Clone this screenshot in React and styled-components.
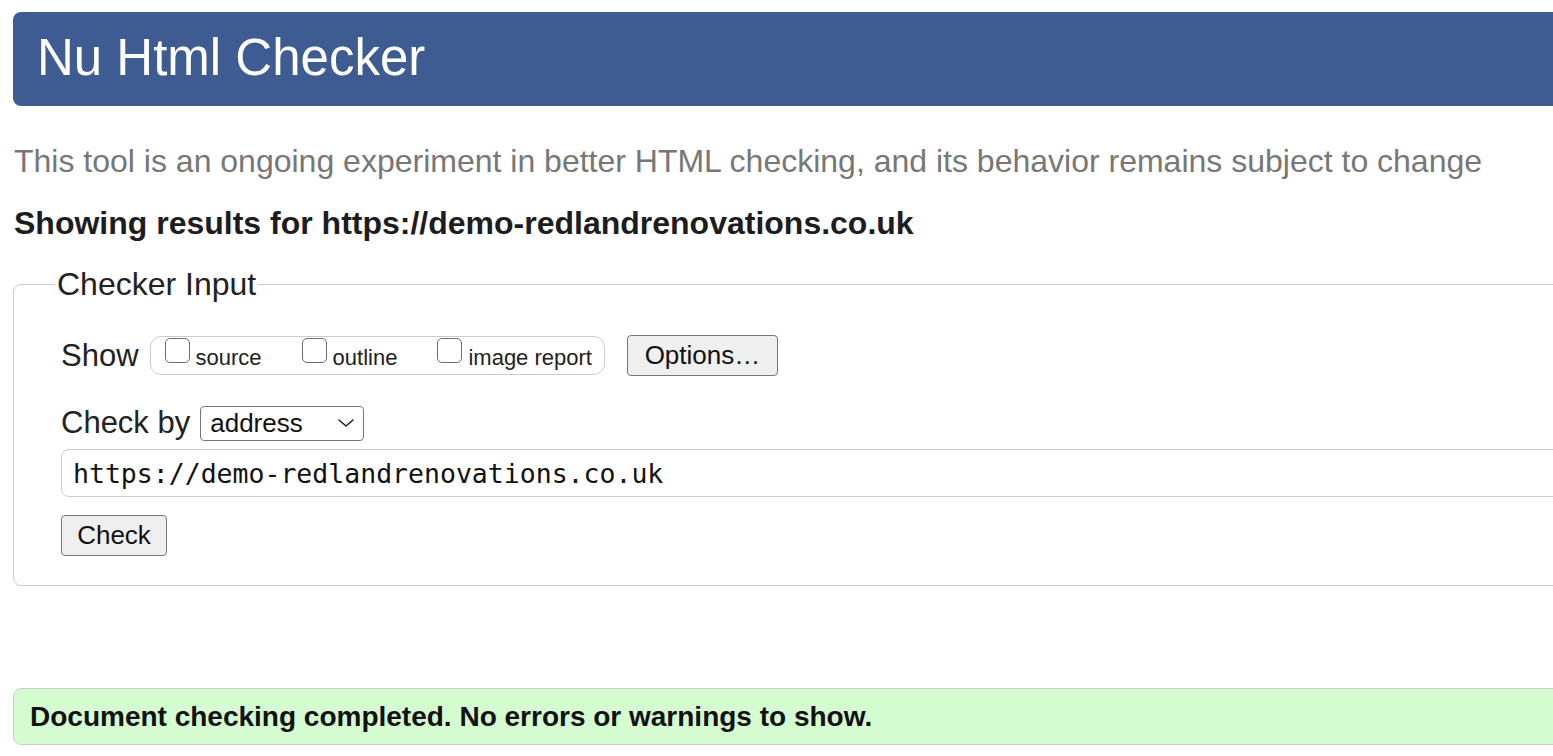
import styled, { createGlobalStyle } from 'styled-components'

const GlobalStyle = createGlobalStyle`
    html, body {
        margin: 0;
        padding: 0;
        background: #fff;
        overflow: hidden;
    }
    body {
        font-family: "Liberation Sans", Arial, sans-serif;
        color: #222;
    }
`

const Page = styled.div`
    width: 1640px;
    padding: 12px 0 0 13px;
    display: flex;
    flex-direction: column;
`
const Header = styled.header`
    height: 94px;
    display: flex;
    align-items: center;
    padding-left: 24px;
    border-radius: 8px;
    background-color: #3e5c91;
`
const Title = styled.h1`
    margin: 0 0 4px;
    font-size: 51px;
    font-weight: 400;
    line-height: 1;
    color: #fff;
`
const Subtitle = styled.p`
    margin: 36px 0 0 1px;
    font-size: 32px;
    line-height: 38px;
    color: #777;
`
const Results = styled.h2`
    margin: 24px 0 0 1px;
    font-size: 32px;
    line-height: 38px;
    font-weight: 700;
    color: #1d1d1f;
`
const Fieldset = styled.fieldset`
    margin: 23px 0 0;
    padding: 0 0 29px 47px;
    border: 1.5px solid #ccc;
    border-radius: 8px;
    min-width: 0;
`
const Legend = styled.legend`
    margin-left: -6px;
    padding: 0 2px;
    font-size: 32px;
    line-height: 38px;
    color: #222;
`
const Row = styled.div`
    display: flex;
    align-items: center;
    margin-top: ${p => p.$top}px;
`
const Label = styled.span`
    font-size: 31px;
    line-height: 38px;
    color: #222;
`
const ToggleGroup = styled.div`
    display: flex;
    align-items: flex-start;
    gap: 40px;
    height: 39px;
    box-sizing: border-box;
    margin-left: 11px;
    padding: 1px 12px 0 14px;
    border: 1.5px solid #ccc;
    border-radius: 11px;
`
const Toggle = styled.label`
    display: flex;
    align-items: flex-start;
    gap: 6px;
`
const Box = styled.span`
    width: 25px;
    height: 25px;
    box-sizing: border-box;
    border: 1.5px solid #6f6f6f;
    border-radius: 5px;
    background: #fff;
`
const ToggleText = styled.span`
    padding-top: 7px;
    font-size: 22px;
    line-height: 26px;
    color: #222;
`
const Button = styled.button`
    height: 41px;
    width: ${p => p.$w}px;
    margin-left: ${p => p.$left || 0}px;
    padding: 0;
    box-sizing: border-box;
    font-family: "Liberation Sans", Arial, sans-serif;
    font-size: 26px;
    color: #111;
    background: #efefef;
    border: 1.5px solid #767676;
    border-radius: 4px;
`
const Select = styled.div`
    display: flex;
    align-items: center;
    justify-content: space-between;
    width: 164px;
    height: 35px;
    box-sizing: border-box;
    margin-left: 10px;
    padding: 0 8px 0 9px;
    border: 1.5px solid #767676;
    border-radius: 4px;
    font-size: 26px;
    color: #111;
`
const UrlInput = styled.input`
    display: block;
    margin-top: 7px;
    width: 100%;
    height: 48px;
    box-sizing: border-box;
    padding: 0 11px;
    border: 1.5px solid #ccc;
    border-radius: 8px;
    font-family: "DejaVu Sans Mono", "Liberation Mono", monospace;
    font-size: 26.5px;
    color: #111;
    outline: none;
`
const Status = styled.div`
    margin-top: 102px;
    height: 57px;
    box-sizing: border-box;
    display: flex;
    align-items: center;
    padding-left: 16px;
    border: 1.5px solid #ccc;
    border-radius: 8px;
    background-color: #d5fcd0;
    font-size: 28px;
    font-weight: 700;
    color: #111;
`

const Chevron = () => (
    <svg width="18" height="12" viewBox="0 0 18 12" fill="none">
        <path d="M2 3l7 6 7-6" stroke="#222" strokeWidth="1.6" strokeLinecap="round" strokeLinejoin="round" />
    </svg>
)

const toggles = ['source', 'outline', 'image report']

export default function App() {
    return (
        <>
            <GlobalStyle />
            <Page>
                <Header>
                    <Title>Nu Html Checker</Title>
                </Header>
                <Subtitle>This tool is an ongoing experiment in better HTML checking, and its behavior remains subject to change</Subtitle>
                <Results>Showing results for https://demo-redlandrenovations.co.uk</Results>
                <Fieldset>
                    <Legend>Checker Input</Legend>
                    <Row $top={32}>
                        <Label>Show</Label>
                        <ToggleGroup>
                            {toggles.map(t => (
                                <Toggle key={t}>
                                    <Box />
                                    <ToggleText>{t}</ToggleText>
                                </Toggle>
                            ))}
                        </ToggleGroup>
                        <Button $w={151} $left={22}>Options…</Button>
                    </Row>
                    <Row $top={28}>
                        <Label>Check by</Label>
                        <Select>
                            <span>address</span>
                            <Chevron />
                        </Select>
                    </Row>
                    <UrlInput readOnly value="https://demo-redlandrenovations.co.uk" />
                    <Row $top={18}>
                        <Button $w={106}>Check</Button>
                    </Row>
                </Fieldset>
                <Status>Document checking completed. No errors or warnings to show.</Status>
            </Page>
        </>
    )
}
